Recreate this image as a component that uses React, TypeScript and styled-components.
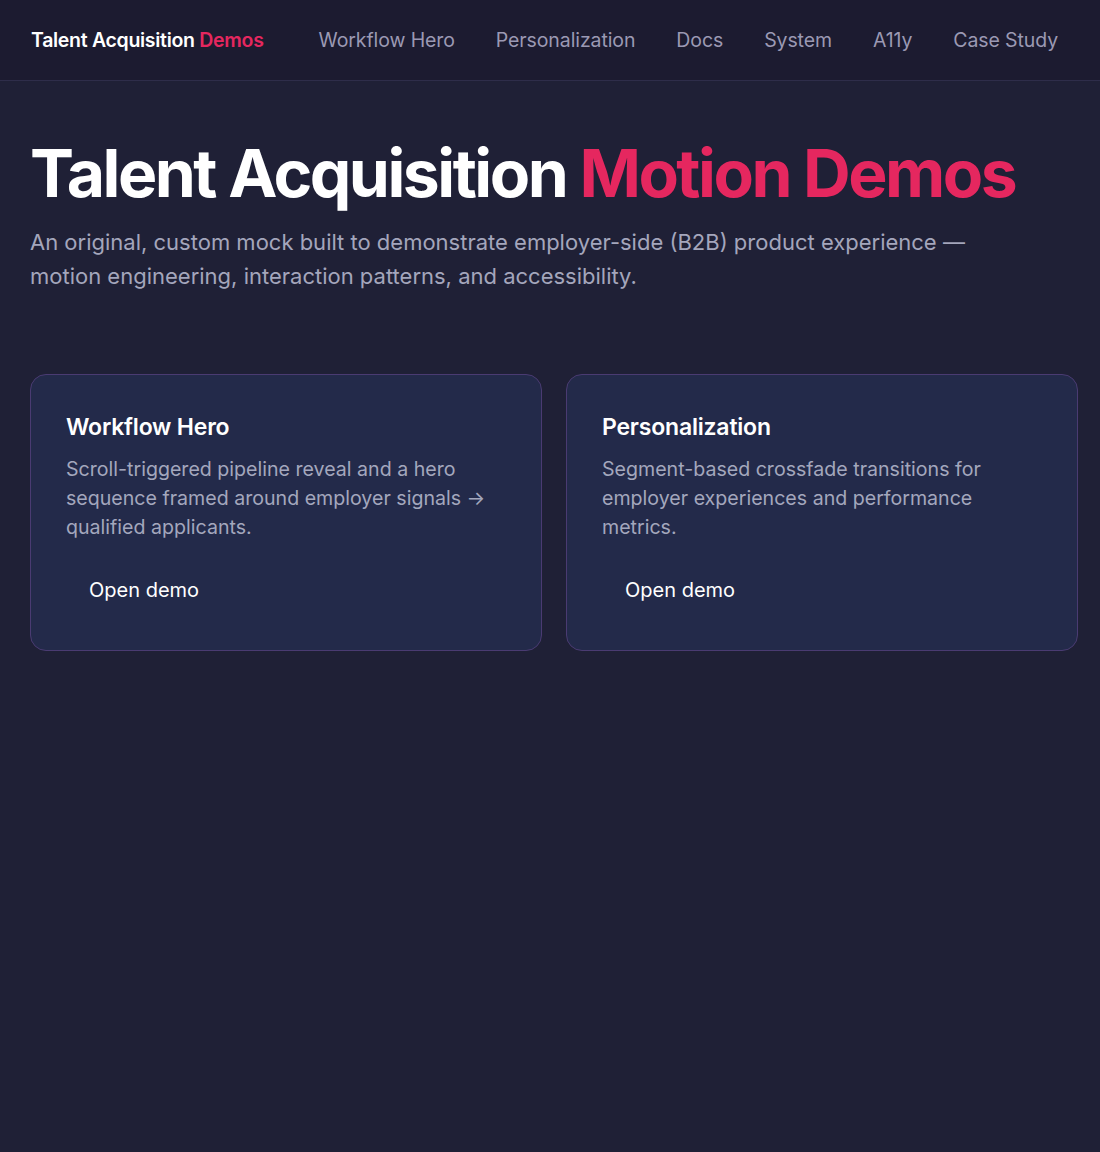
import React from 'react'
import styled, { createGlobalStyle } from 'styled-components'

const GlobalStyle = createGlobalStyle`
  html, body {
    margin: 0;
    padding: 0;
    background: #1f2036;
  }
  body {
    font-family: Inter, 'Noto Sans', 'Liberation Sans', sans-serif;
    -webkit-font-smoothing: antialiased;
  }
`

const Page = styled.div`
  min-height: 1152px;
  background: #1f2036;
  color: #f4f4f8;
`

const TopBar = styled.header`
  height: 81px;
  display: flex;
  align-items: center;
  padding: 0 31px;
  background: #1c1b30;
  border-bottom: 1px solid #2e2d4a;
  box-sizing: border-box;
`

const Brand = styled.a`
  font-size: 19.5px;
  font-weight: 600;
  letter-spacing: -0.3px;
  color: #ffffff;
  margin-right: 55px;
  white-space: nowrap;
`

const Accent = styled.span`
  color: #e5275f;
`

const Nav = styled.nav`
  display: flex;
  gap: 41px;
`

const NavLink = styled.a`
  font-size: 19.5px;
  letter-spacing: -0.1px;
  color: #9b99b3;
  white-space: nowrap;
`

const Main = styled.main`
  padding: 52px 22px 0 30px;
`

const Title = styled.h1`
  margin: 0;
  font-size: 66px;
  font-weight: 700;
  letter-spacing: -2.5px;
  line-height: 80px;
  color: #ffffff;
`

const Lead = styled.p`
  margin: 12px 0 0;
  max-width: 980px;
  font-size: 22px;
  line-height: 34px;
  color: #a4a6bc;
`

const CardGrid = styled.div`
  display: grid;
  grid-template-columns: 1fr 1fr;
  gap: 24px;
  margin-top: 81px;
`

const Card = styled.article`
  background: #232a4a;
  border: 1px solid #4a3b72;
  border-radius: 16px;
  padding: 36px 35px 39px;
  min-height: 277px;
  box-sizing: border-box;
`

const CardTitle = styled.h2`
  margin: 0;
  font-size: 23px;
  font-weight: 600;
  letter-spacing: -0.2px;
  color: #ffffff;
  line-height: 32px;
`

const CardText = styled.p`
  margin: 12px 0 0;
  font-size: 19.6px;
  line-height: 29px;
  color: #a3a7bd;
`

const OpenButton = styled.button`
  margin-top: 28px;
  padding: 8px 23px;
  background: transparent;
  border: none;
  font-family: inherit;
  font-size: 20px;
  color: #ffffff;
  cursor: pointer;
`

const demos = [
  {
    title: 'Workflow Hero',
    text: 'Scroll-triggered pipeline reveal and a hero sequence framed around employer signals → qualified applicants.',
  },
  {
    title: 'Personalization',
    text: 'Segment-based crossfade transitions for employer experiences and performance metrics.',
  },
]

const links = ['Workflow Hero', 'Personalization', 'Docs', 'System', 'A11y', 'Case Study']

const App = () => (
  <Page>
    <GlobalStyle />
    <TopBar>
      <Brand>
        Talent Acquisition <Accent>Demos</Accent>
      </Brand>
      <Nav>
        {links.map((l) => (
          <NavLink key={l}>{l}</NavLink>
        ))}
      </Nav>
    </TopBar>
    <Main>
      <Title>
        Talent Acquisition <Accent>Motion Demos</Accent>
      </Title>
      <Lead>
        An original, custom mock built to demonstrate employer-side (B2B) product experience — motion
        engineering, interaction patterns, and accessibility.
      </Lead>
      <CardGrid>
        {demos.map((d) => (
          <Card key={d.title}>
            <CardTitle>{d.title}</CardTitle>
            <CardText>{d.text}</CardText>
            <OpenButton>Open demo</OpenButton>
          </Card>
        ))}
      </CardGrid>
    </Main>
  </Page>
)

export default App
